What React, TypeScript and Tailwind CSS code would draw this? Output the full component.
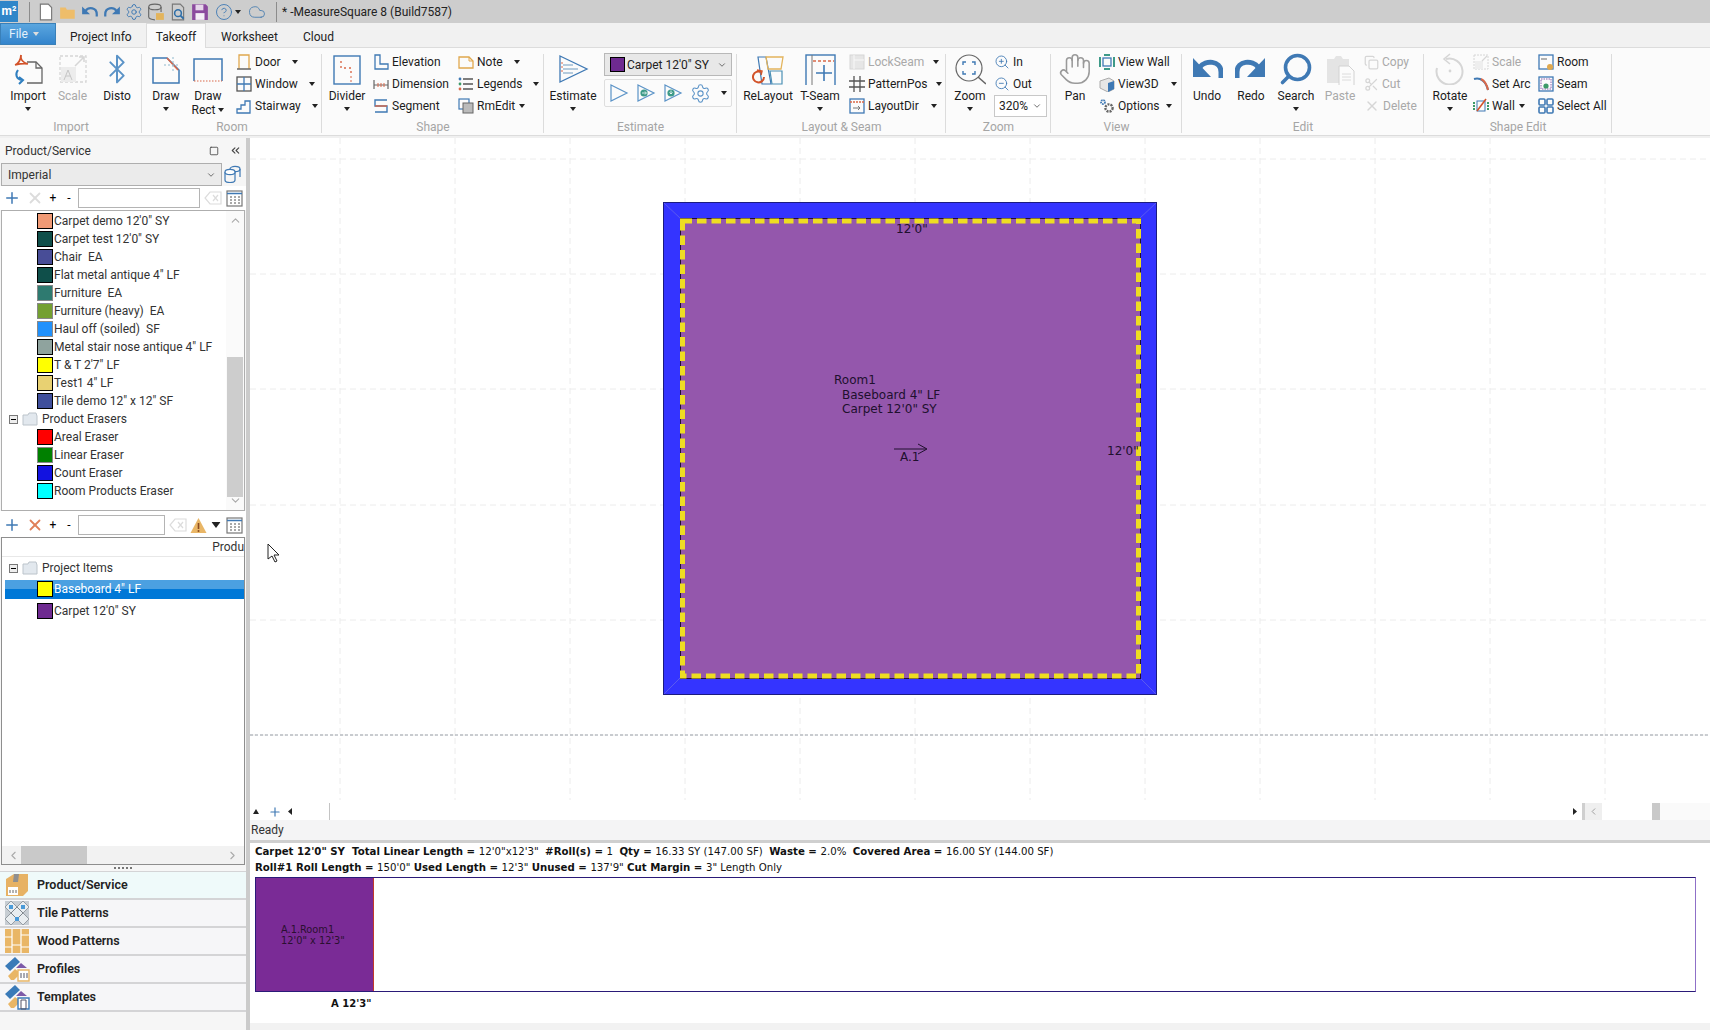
import type { ReactNode } from 'react';
import { Bluetooth, ChevronDown, ChevronLeft, ChevronRight, ChevronUp, ChevronsLeft, CircleHelp, Cloud, Copy, Hand, Plus, Scissors, Search, Settings, Square, X, ZoomIn, ZoomOut } from 'lucide-react';

const Caret = ({ className = '' }: { className?: string }) => (
  <svg width="6" height="4" viewBox="0 0 6 4" className={`shrink-0 ${className}`}>
    <path d="M0 0h6L3 4z" fill="#222" />
  </svg>
);

const Ico = ({ s = 32, v = 32, children }: { s?: number; v?: number; children: ReactNode }) => (
  <svg width={s} height={s} viewBox={`0 0 ${v} ${v}`} fill="none" className="shrink-0">
    {children}
  </svg>
);

const BLUE = '#3f79b4';
const GREY = '#d6d6d6';

// big ribbon icons
const ImportIcon = () => (
  <Ico>
    <path d="M15 9h9l6 6v15H15" stroke="#666" strokeWidth="1.3" />
    <path d="M24 9v6h6" stroke="#666" strokeWidth="1.3" />
    <path d="M9 2c-1 5 3 8 7 9M9 2C9 7 6 11 3 12M3 12c4-1 9-2 13-1" stroke="#d2532a" strokeWidth="1.8" />
    <path d="M6 17c-3 4-2 9 4 10M7 31l4-4-4-3" stroke="#2f7fc0" strokeWidth="2" />
  </Ico>
);
const ScaleIcon = () => (
  <Ico>
    <rect x="3" y="3" width="26" height="26" stroke={GREY} strokeWidth="1.3" strokeDasharray="3 2" />
    <rect x="4" y="14" width="15" height="15" fill="#ececec" />
    <path d="M7 27l4-10 4 10M9 23h4" stroke="#c6c6c6" />
    <path d="M18 13l9-9M22 4h5v5" stroke={GREY} strokeWidth="1.5" />
  </Ico>
);
const DrawIcon = () => (
  <Ico>
    <path d="M3 5h14l12 12v13H3z" stroke={BLUE} strokeWidth="1.5" />
    <path d="M17 5l11 12" stroke="#d9694a" strokeWidth="1.6" />
    <path d="M14 12h16M23 4v14" stroke="#8fb8cc" strokeDasharray="2 2" />
  </Ico>
);
const RectIcon = () => (
  <Ico>
    <path d="M2 28V6h28v22" stroke={BLUE} strokeWidth="1.5" />
    <path d="M2 28h28" stroke="#d9694a" strokeDasharray="1.5 1.5" />
  </Ico>
);
const DividerIcon = () => (
  <Ico>
    <rect x="3" y="3" width="26" height="28" stroke={BLUE} strokeWidth="1.4" />
    <path d="M10 8v7h10v8" stroke="#d9694a" strokeDasharray="2 3" strokeWidth="1.4" />
    <path d="M20 23v8" stroke="#d9694a" strokeDasharray="2 2" />
  </Ico>
);
const EstimateIcon = () => (
  <Ico>
    <path d="M3 3l27 13L3 29z" stroke={BLUE} strokeWidth="1.3" />
    <path d="M6 12h10M6 16h15M6 20h10" stroke="#9fbcd4" strokeWidth="1.3" />
    <path d="M4 10h2M4 14h2M4 18h2" stroke="#d9694a" />
  </Ico>
);
const ReLayoutIcon = () => (
  <Ico>
    <path d="M6 4h8l5 27H10z" stroke="#3f79b4" strokeWidth="1.2" />
    <path d="M14 4h17l-2 12H16z" stroke="#e3b45c" strokeWidth="1.3" />
    <path d="M18 18h12v13H20z" stroke="#4b90b5" strokeWidth="1.2" />
    <path d="M12 24a5.5 5.5 0 1 1-3-5" stroke="#d2532a" strokeWidth="2" />
    <path d="M5 17l5 1-1 4" stroke="#d2532a" strokeWidth="1.5" />
  </Ico>
);
const TSeamIcon = () => (
  <Ico>
    <rect x="2" y="2" width="29" height="31" stroke={BLUE} strokeWidth="1.4" />
    <path d="M8 2v31" stroke="#777" />
    <path d="M9 8h21" stroke="#d9694a" strokeWidth="1.5" strokeDasharray="3 2" />
    <path d="M20 12v16M12 20h16" stroke={BLUE} strokeWidth="1.6" />
  </Ico>
);
const ZoomIcon = () => (
  <Ico>
    <circle cx="15" cy="15" r="13" stroke="#666" strokeWidth="1.2" />
    <path d="M24 24l8 7" stroke="#666" strokeWidth="1.6" />
    <path d="M9 12V9h3M18 9h3v3M21 18v3h-3M12 21H9v-3" stroke={BLUE} strokeWidth="1.4" />
  </Ico>
);
const UndoIcon = () => (
  <Ico>
    <path d="M9 14c5-7 21-7 21 5v6" stroke={BLUE} strokeWidth="5" />
    <path d="M2 5v19h18z" fill={BLUE} />
  </Ico>
);
const RedoIcon = () => (
  <Ico>
    <path d="M23 14c-5-7-21-7-21 5v6" stroke={BLUE} strokeWidth="5" />
    <path d="M30 5v19H12z" fill={BLUE} />
  </Ico>
);
const RotateIcon = () => (
  <Ico>
    <path d="M12 6a13 13 0 1 1-9 9" stroke={GREY} strokeWidth="2" />
    <path d="M16 1l-6 5 6 5" stroke={GREY} strokeWidth="1.6" />
    <circle cx="16" cy="18" r="1.4" fill={GREY} />
  </Ico>
);
const PasteIcon = () => (
  <Ico>
    <path d="M3 6h7l2-3h5l2 3h6v24H3z" fill="#e4e4e4" />
    <path d="M15 13h10l5 5v15H15z" fill="#fbfbfb" stroke="#d2d2d2" />
    <path d="M18 21h9M18 24h9M18 27h9" stroke="#dcdcdc" />
  </Ico>
);

// small ribbon icons
const sm = { s: 16, v: 16 };
const DoorIcon = () => (
  <Ico {...sm}>
    <path d="M3 15V1h10v14" stroke="#e0a84e" strokeWidth="1.3" />
    <path d="M1 15h14" stroke="#666" strokeWidth="1.5" />
  </Ico>
);
const WindowIcon = () => (
  <Ico {...sm}>
    <rect x="1" y="1" width="14" height="14" stroke="#555" strokeWidth="1.3" />
    <path d="M8 1v14M1 8h14" stroke={BLUE} strokeWidth="1.3" />
  </Ico>
);
const StairIcon = () => (
  <Ico {...sm}>
    <path d="M1 15v-4h4V7h4V3h5v12z" stroke={BLUE} strokeWidth="1.3" />
  </Ico>
);
const ElevationIcon = () => (
  <Ico {...sm}>
    <path d="M2 1h5v9h8v5H2z" stroke={BLUE} strokeWidth="1.3" />
  </Ico>
);
const DimensionIcon = () => (
  <Ico {...sm}>
    <path d="M1 4v9M15 4v9M1 9h14" stroke="#666" strokeWidth="1.2" />
    <path d="M5 7v4M8 7v4M11 7v4" stroke="#d9694a" />
  </Ico>
);
const SegmentIcon = () => (
  <Ico {...sm}>
    <path d="M14 2H2v6h12v6H2" stroke={BLUE} strokeWidth="1.4" />
    <path d="M2 8h12" stroke="#d9694a" strokeWidth="1.4" />
  </Ico>
);
const NoteIcon = () => (
  <Ico {...sm}>
    <path d="M1 3h10l4 4v7H1z" stroke="#e0a84e" strokeWidth="1.3" />
    <path d="M11 3v4h4" stroke="#e0a84e" />
  </Ico>
);
const LegendsIcon = () => (
  <Ico {...sm}>
    <path d="M5 3h10M5 8h10M5 13h10" stroke="#555" strokeWidth="1.5" />
    <circle cx="2" cy="3" r="1.4" fill={BLUE} />
    <circle cx="2" cy="8" r="1.4" fill="#3d9a68" />
    <circle cx="2" cy="13" r="1.4" fill="#d9694a" />
  </Ico>
);
const RmEditIcon = () => (
  <Ico {...sm}>
    <rect x="1" y="1" width="10" height="10" stroke={BLUE} strokeWidth="1.2" />
    <rect x="5" y="5" width="10" height="10" fill="#bbb" stroke="#666" />
  </Ico>
);
const LockSeamIcon = () => (
  <Ico {...sm}>
    <rect x="1" y="1" width="14" height="14" fill="#e6e6e6" stroke={GREY} />
    <path d="M5 1v14M5 6h10" stroke="#f8f8f8" />
  </Ico>
);
const PatternIcon = () => (
  <Ico {...sm}>
    <path d="M5 0v16M11 0v16M0 5h16M0 11h16" stroke="#555" strokeWidth="1.3" />
  </Ico>
);
const LayoutDirIcon = () => (
  <Ico {...sm}>
    <rect x="1" y="1" width="14" height="14" stroke={BLUE} strokeWidth="1.3" />
    <path d="M1 4h14" stroke="#d9694a" strokeDasharray="2 1" strokeWidth="1.3" />
    <path d="M4 10h7M9 8l2 2-2 2" stroke="#777" />
  </Ico>
);
const ViewWallIcon = () => (
  <Ico {...sm}>
    <rect x="4" y="4" width="8" height="8" stroke={BLUE} strokeWidth="1.3" />
    <path d="M1 3v10M15 3v10M5 1h6M5 15h6" stroke="#3d9a88" strokeWidth="2" />
  </Ico>
);
const View3dIcon = () => (
  <Ico {...sm}>
    <path d="M1 5l9-3 5 3v8l-6 3-8-4z" fill="#e6e6e6" stroke="#aaa" />
    <path d="M9 7l6-2v8l-6 3z" fill="#3f79b4" />
  </Ico>
);
const OptionsIcon = () => (
  <Ico {...sm}>
    <circle cx="10" cy="10" r="3.6" stroke="#666" strokeWidth="2.4" strokeDasharray="2 1" />
    <circle cx="4" cy="4" r="2" stroke={BLUE} strokeWidth="1.8" strokeDasharray="1.5 .7" />
  </Ico>
);
const ShapeScaleIcon = () => (
  <Ico {...sm}>
    <rect x="1" y="1" width="14" height="14" stroke={GREY} strokeDasharray="2 1" />
    <rect x="2" y="7" width="8" height="8" fill="#eee" />
    <path d="M9 7l5-5" stroke={GREY} strokeWidth="1.3" />
  </Ico>
);
const SetArcIcon = () => (
  <Ico {...sm}>
    <path d="M1 3c7-2 12 3 14 11" stroke="#3f79b4" strokeWidth="2" />
    <path d="M8 3c4 2 6 6 7 11" stroke="#d9694a" strokeWidth="2" />
  </Ico>
);
const WallIcon = () => (
  <Ico {...sm}>
    <path d="M1 4v8M15 4v8" stroke="#3d9a68" strokeWidth="2" strokeDasharray="2 1" />
    <rect x="4" y="3" width="8" height="10" stroke={BLUE} />
    <path d="M4 13L13 1" stroke="#d2532a" strokeWidth="1.6" />
  </Ico>
);
const RoomIcon = () => (
  <Ico {...sm}>
    <rect x="1" y="1" width="14" height="14" stroke={BLUE} strokeWidth="1.3" />
    <path d="M3 5h6" stroke="#999" strokeWidth="1.5" />
    <circle cx="12" cy="13" r="3" fill="#e0a84e" />
  </Ico>
);
const SeamIcon = () => (
  <Ico {...sm}>
    <rect x="1" y="1" width="14" height="14" stroke={BLUE} strokeWidth="1.3" />
    <rect x="3" y="3" width="10" height="10" stroke="#8c5fb0" strokeDasharray="1.5 1" />
    <circle cx="8" cy="10" r="2.6" fill="#3d9a68" />
  </Ico>
);
const SelectAllIcon = () => (
  <Ico {...sm}>
    <rect x="1" y="1" width="6" height="6" rx="1" stroke={BLUE} strokeWidth="1.6" />
    <rect x="9" y="1" width="6" height="6" rx="1" stroke={BLUE} strokeWidth="1.6" />
    <rect x="1" y="9" width="6" height="6" rx="1" stroke={BLUE} strokeWidth="1.6" />
    <rect x="9" y="9" width="6" height="6" rx="1" stroke={BLUE} strokeWidth="1.6" />
  </Ico>
);

const BigBtn = ({ w, icon, label, label2, caret, off }: { w: string; icon: ReactNode; label: string; label2?: string; caret?: boolean; off?: boolean }) => (
  <div className={`flex flex-col items-center shrink-0 ${w} ${off ? 'text-[#a9a9a9]' : 'text-[#1c1c1c]'}`}>
    <div className="h-[41px] flex items-center justify-center">{icon}</div>
    <div className="h-[14px] leading-[14px] whitespace-nowrap">{label}</div>
    {label2 && (
      <div className="h-[14px] leading-[13px] flex items-center gap-[3px] whitespace-nowrap">
        {label2}
        {caret && <Caret />}
      </div>
    )}
    {!label2 && caret && (
      <div className="h-[12px] flex items-center">
        <Caret />
      </div>
    )}
  </div>
);

const SmallBtn = ({ icon, label, caret, off }: { icon: ReactNode; label: string; caret?: string; off?: boolean }) => (
  <div className={`h-[22px] flex items-center gap-[3px] whitespace-nowrap ${off ? 'text-[#a9a9a9]' : 'text-[#1c1c1c]'}`}>
    {icon}
    <span>{label}</span>
    {caret && <Caret className={caret} />}
  </div>
);

const SmallCol = ({ className, children }: { className: string; children: ReactNode }) => (
  <div className={`flex flex-col pt-[3px] shrink-0 ${className}`}>{children}</div>
);

const Group = ({ w, label, children }: { w: string; label: string; children: ReactNode }) => (
  <div className={`relative h-full shrink-0 flex flex-col ${w}`}>
    <div className="flex h-[71px] items-start">{children}</div>
    <div className="text-center text-[#a5a5a5] leading-[14px] mt-[1px]">{label}</div>
    <div className="absolute right-0 top-[6px] bottom-[2px] w-px bg-[#dcdcdc]" />
  </div>
);

const Ribbon = () => (
  <div className="h-[88px] bg-[#fbfbfb] flex text-[12px] border-b border-[#dcdcdc] shrink-0">
    <Group w="w-[142px]" label="Import">
      <div className="w-[6px]" />
      <BigBtn w="w-[44px]" icon={<ImportIcon />} label="Import" caret />
      <BigBtn w="w-[45px]" icon={<ScaleIcon />} label="Scale" off />
      <BigBtn w="w-[44px]" icon={<Bluetooth size={32} color="#5b93c7" strokeWidth={1.5} />} label="Disto" />
    </Group>
    <Group w="w-[180px]" label="Room">
      <div className="w-[2px]" />
      <BigBtn w="w-[44px]" icon={<DrawIcon />} label="Draw" caret />
      <BigBtn w="w-[40px]" icon={<RectIcon />} label="Draw" label2="Rect" caret />
      <SmallCol className="ml-[8px] w-[84px]">
        <SmallBtn icon={<DoorIcon />} label="Door" caret="ml-[8px]" />
        <SmallBtn icon={<WindowIcon />} label="Window" caret="ml-[8px]" />
        <SmallBtn icon={<StairIcon />} label="Stairway" caret="ml-[8px]" />
      </SmallCol>
    </Group>
    <Group w="w-[222px]" label="Shape">
      <div className="w-[4px]" />
      <BigBtn w="w-[42px]" icon={<DividerIcon />} label="Divider" caret />
      <SmallCol className="ml-[5px] w-[85px]">
        <SmallBtn icon={<ElevationIcon />} label="Elevation" />
        <SmallBtn icon={<DimensionIcon />} label="Dimension" />
        <SmallBtn icon={<SegmentIcon />} label="Segment" />
      </SmallCol>
      <SmallCol className="w-[84px]">
        <SmallBtn icon={<NoteIcon />} label="Note" caret="ml-[8px]" />
        <SmallBtn icon={<LegendsIcon />} label="Legends" caret="ml-[7px]" />
        <SmallBtn icon={<RmEditIcon />} label="RmEdit" caret="ml-[1px]" />
      </SmallCol>
    </Group>
    <Group w="w-[193px]" label="Estimate">
      <BigBtn w="w-[58px]" icon={<EstimateIcon />} label="Estimate" caret />
      <div className="ml-[2px] w-[128px] pt-[5px] flex flex-col gap-[3px]">
        <div className="h-[23px] bg-[#e8e8e8] border border-[#b8b8b8] flex items-center pl-[5px] pr-[4px]">
          <span className="w-[15px] h-[15px] bg-[#6e2a90] border border-black mr-[2px]" />
          <span className="flex-1 text-[#222]">Carpet 12'0" SY</span>
          <ChevronDown size={10} color="#555" />
        </div>
        <div className="h-[28px] border border-[#dedede] rounded-[2px] flex items-center gap-[7px] pl-[4px]">
          <Ico s={20} v={20}><path d="M2 2l16 8-16 8z" stroke="#5b93c7" strokeWidth="1.2" /></Ico>
          <Ico s={20} v={20}>
            <path d="M2 2l16 8-16 8z" stroke="#5b93c7" strokeWidth="1.2" />
            <circle cx="8" cy="10" r="3.6" fill="#3d9a88" />
            <path d="M6 10h4M9 8.5l1.5 1.5L9 11.5" stroke="#fff" strokeWidth=".8" />
          </Ico>
          <Ico s={20} v={20}>
            <path d="M2 2l16 8-16 8z" stroke="#5b93c7" strokeWidth="1.2" />
            <circle cx="8" cy="10" r="3.6" fill="#3d9a88" />
            <path d="M8 7.5v3.5M6.5 9.5L8 11l1.5-1.5" stroke="#fff" strokeWidth=".8" />
          </Ico>
          <Settings size={21} color="#5b93c7" strokeWidth={1.2} />
          <Caret className="ml-[3px]" />
        </div>
      </div>
    </Group>
    <Group w="w-[209px]" label="Layout & Seam">
      <div className="w-[3px]" />
      <BigBtn w="w-[56px]" icon={<ReLayoutIcon />} label="ReLayout" />
      <BigBtn w="w-[48px]" icon={<TSeamIcon />} label="T-Seam" caret />
      <SmallCol className="ml-[5px] w-[94px]">
        <SmallBtn icon={<LockSeamIcon />} label="LockSeam" caret="ml-[6px]" off />
        <SmallBtn icon={<PatternIcon />} label="PatternPos" caret="ml-[6px]" />
        <SmallBtn icon={<LayoutDirIcon />} label="LayoutDir" caret="ml-[9px]" />
      </SmallCol>
    </Group>
    <Group w="w-[105px]" label="Zoom">
      <div className="w-[3px]" />
      <BigBtn w="w-[42px]" icon={<ZoomIcon />} label="Zoom" caret />
      <SmallCol className="ml-[3px]">
        <SmallBtn icon={<ZoomIn size={16} color="#3f79b4" strokeWidth={1.3} />} label="In" />
        <SmallBtn icon={<ZoomOut size={16} color="#3f79b4" strokeWidth={1.3} />} label="Out" />
        <div className="w-[53px] h-[22px] bg-white border border-[#c8c8c8] flex items-center justify-between px-[4px] text-[#222]">
          320%
          <ChevronDown size={10} color="#555" />
        </div>
      </SmallCol>
    </Group>
    <Group w="w-[131px]" label="View">
      <div className="w-[4px]" />
      <BigBtn w="w-[40px]" icon={<Hand size={34} color="#9a9a9a" strokeWidth={1.1} />} label="Pan" />
      <SmallCol className="ml-[4px]">
        <SmallBtn icon={<ViewWallIcon />} label="View Wall" />
        <SmallBtn icon={<View3dIcon />} label="View3D" caret="ml-[9px]" />
        <SmallBtn icon={<OptionsIcon />} label="Options" caret="ml-[3px]" />
      </SmallCol>
    </Group>
    <Group w="w-[242px]" label="Edit">
      <div className="w-[3px]" />
      <BigBtn w="w-[44px]" icon={<UndoIcon />} label="Undo" />
      <BigBtn w="w-[44px]" icon={<RedoIcon />} label="Redo" />
      <BigBtn w="w-[46px]" icon={<Search size={36} color="#3f79b4" strokeWidth={2.4} className="-scale-x-100" />} label="Search" caret />
      <BigBtn w="w-[42px]" icon={<PasteIcon />} label="Paste" off />
      <SmallCol className="ml-[3px]">
        <SmallBtn icon={<Copy size={15} color="#d6d6d6" />} label="Copy" off />
        <SmallBtn icon={<Scissors size={15} color="#d6d6d6" />} label="Cut" off />
        <SmallBtn icon={<X size={16} color="#d6d6d6" />} label="Delete" off />
      </SmallCol>
    </Group>
    <Group w="w-[188px]" label="Shape Edit">
      <div className="w-[4px]" />
      <BigBtn w="w-[44px]" icon={<RotateIcon />} label="Rotate" caret />
      <SmallCol className="ml-[1px] w-[64px]">
        <SmallBtn icon={<ShapeScaleIcon />} label="Scale" off />
        <SmallBtn icon={<SetArcIcon />} label="Set Arc" />
        <SmallBtn icon={<WallIcon />} label="Wall" caret="ml-[1px]" />
      </SmallCol>
      <SmallCol className="ml-[1px]">
        <SmallBtn icon={<RoomIcon />} label="Room" />
        <SmallBtn icon={<SeamIcon />} label="Seam" />
        <SmallBtn icon={<SelectAllIcon />} label="Select All" />
      </SmallCol>
    </Group>
  </div>
);

const TitleBar = () => (
  <div className="h-[23px] bg-[#cdcdcd] flex items-center shrink-0 text-[12px] text-[#222]">
    <div className="w-[18px] h-[21px] bg-[#2f86c9] text-white text-[12px] font-bold leading-[21px] text-center">m²</div>
    <div className="ml-[11px] w-px h-[20px] bg-[#8c8c8c]" />
    <div className="ml-[7px] flex items-center gap-[4px]">
      <Ico s={18} v={16}><path d="M3 1h7l3 3v11H3z" fill="#fff" stroke="#777" /></Ico>
      <Ico s={18} v={16}><path d="M1 4h5l1 2h7v8H1z" fill="#eebd6a" /></Ico>
      <Ico s={18} v={16}><path d="M4 7c3-4 10-3 10 3v2" stroke={BLUE} strokeWidth="2" /><path d="M1 3v7h7z" fill={BLUE} /></Ico>
      <Ico s={18} v={16}><path d="M12 7C9 3 2 4 2 10v2" stroke={BLUE} strokeWidth="2" /><path d="M15 3v7H8z" fill={BLUE} /></Ico>
      <Settings size={18} color="#3f79b4" strokeWidth={1.3} />
      <Ico s={18} v={16}><ellipse cx="7" cy="3.5" rx="5.5" ry="2.5" stroke="#666" /><path d="M1.5 3.5v9c0 1.5 3 2.5 5.5 2.5M12.5 3.5V8" stroke="#666" /><rect x="8" y="9" width="7" height="6" fill="#e3b45c" /></Ico>
      <Ico s={18} v={16}><path d="M3 1h7l3 3v11H3z" stroke="#777" /><circle cx="8" cy="9" r="3" stroke="#2f6fa8" strokeWidth="1.4" /><path d="M10 11l3 3" stroke="#2f6fa8" strokeWidth="1.6" /></Ico>
      <Ico s={18} v={16}><path d="M1 1h12l2 2v12H1z" fill="#8b4a9e" /><rect x="4" y="1.5" width="7" height="5" fill="#e6d6ea" /><rect x="4" y="9" width="8" height="6" fill="#f4eef6" /></Ico>
    </div>
    <div className="ml-[6px] flex items-center gap-[2px]">
      <CircleHelp size={18} color="#3f79b4" strokeWidth={1.2} />
      <Caret />
    </div>
    <Cloud size={18} color="#4c7fb0" strokeWidth={1.2} className="ml-[7px]" />
    <div className="ml-[10px] w-px h-[20px] bg-[#8c8c8c]" />
    <div className="ml-[5px]">* -MeasureSquare 8 (Build7587)</div>
  </div>
);

const TabRow = () => (
  <div className="h-[25px] bg-[#f1f1f1] flex items-end shrink-0 text-[12px] text-[#222] border-b border-[#dcdcdc]">
    <div className="w-[56px] h-[22px] mb-[2px] bg-linear-to-b from-[#5aa6df] to-[#3384cc] border border-[#3a80b8] flex items-center gap-[5px] pl-[8px] text-[#e4f1fb]">
      File
      <Caret className="invert" />
    </div>
    <div className="ml-[14px] w-[76px] h-[24px] leading-[28px]">Project Info</div>
    <div className="w-[60px] h-[25px] -mb-px bg-[#fbfbfb] border border-b-0 border-[#dcdcdc] text-center leading-[27px]">Takeoff</div>
    <div className="ml-[15px] w-[82px] h-[24px] leading-[28px]">Worksheet</div>
    <div className="h-[24px] leading-[28px]">Cloud</div>
  </div>
);

const SWATCH: { name: string; color: string; plain?: boolean }[] = [
  { name: `Carpet demo 12'0" SY`, color: '#f19a75' },
  { name: `Carpet test 12'0" SY`, color: '#0f4f4a' },
  { name: 'Chair  EA', color: '#484d97' },
  { name: 'Flat metal antique 4" LF', color: '#0f4f4a' },
  { name: 'Furniture  EA', color: '#2e7a70', plain: true },
  { name: 'Furniture (heavy)  EA', color: '#74a031', plain: true },
  { name: 'Haul off (soiled)  SF', color: '#2191fb', plain: true },
  { name: 'Metal stair nose antique 4" LF', color: '#8fa39e' },
  { name: `T & T 2'7" LF`, color: '#ffff00' },
  { name: 'Test1 4" LF', color: '#e8d172' },
  { name: `Tile demo 12" x 12" SF`, color: '#3f4f9c' },
];

const ERASERS: { name: string; color: string; plain?: boolean }[] = [
  { name: 'Areal Eraser', color: '#ff0000' },
  { name: 'Linear Eraser', color: '#008000', plain: true },
  { name: 'Count Eraser', color: '#1212e0' },
  { name: 'Room Products Eraser', color: '#00ffff' },
];

const Row = ({ name, color, plain, selected }: { name: string; color: string; plain?: boolean; selected?: boolean }) => (
  <div className={`h-[18px] flex items-center pl-[35px] whitespace-pre ${selected ? 'text-white' : 'text-[#333]'}`}>
    <span className={`w-[16px] h-[16px] shrink-0 mr-px border ${plain ? 'border-[#888]' : 'border-black'}`} style={{ backgroundColor: color }} />
    {name}
  </div>
);

const Folder = ({ name }: { name: string }) => (
  <div className="h-[18px] flex items-center pl-[7px] text-[#333]">
    <span className="w-[9px] h-[9px] border border-[#777] bg-[#eee] flex items-center justify-center shrink-0">
      <span className="w-[5px] h-px bg-black" />
    </span>
    <div className="ml-[4px]">
      <Ico s={16} v={16}>
        <path d="M1 4h5l1-2h7l1 3v9H1z" fill="#e2e8ee" stroke="#bcc4cb" />
      </Ico>
    </div>
    <span className="ml-[4px]">{name}</span>
  </div>
);

const GridBtn = () => (
  <Ico s={17} v={17}>
    <rect x="1" y="1" width="15" height="15" stroke="#777" strokeWidth="1.2" />
    <path d="M1 3.5h15" stroke="#3f79b4" strokeWidth="1.5" />
    <path d="M4 7h2M8 7h2M12 7h2M4 10h2M8 10h2M12 10h2M4 13h2M8 13h2M12 13h2" stroke="#555" strokeWidth="1.2" />
  </Ico>
);

const EraseBtn = () => (
  <Ico s={18} v={18}>
    <path d="M6 3h11v12H6L1 9z" stroke="#dcdcdc" strokeWidth="1.2" />
    <path d="M9 6l5 6M14 6l-5 6" stroke="#dcdcdc" strokeWidth="1.2" />
  </Ico>
);

const AccordionRow = ({ label, icon, active }: { label: string; icon: ReactNode; active?: boolean }) => (
  <div className={`h-[28px] flex items-center border-b-2 border-[#d4d4d6] ${active ? 'bg-[#effafa]' : 'bg-[#f6f6f8]'}`}>
    <div className="w-[24px] ml-[5px] flex justify-center">{icon}</div>
    <div className="ml-[8px] font-semibold text-[12.5px] text-[#222]">{label}</div>
  </div>
);

const ProductIcon = () => (
  <Ico s={24} v={24}>
    <path d="M1 6l8-5h14v17l-5 5H1z" fill="#e7b264" />
    <path d="M9 1l-1 8h5l1-8" fill="#8f8f8f" />
    <rect x="3" y="14" width="10" height="8" fill="#fff" />
    <path d="M5 17v3M8 17v3M11 17v3" stroke="#666" />
  </Ico>
);
const TileIcon = () => (
  <Ico s={24} v={24}>
    <rect width="24" height="24" fill="#c7cdd3" />
    <path d="M6 0l6 6-6 6-6-6zM18 0l6 6-6 6-6-6zM12 6l6 6-6 6-6-6zM6 12l6 6-6 6-6-6zM18 12l6 6-6 6-6-6z" fill="#e9edf0" stroke="#6a7078" strokeWidth=".6" />
    <rect x="4" y="4" width="4" height="4" fill="#4a9ad8" />
    <rect x="16" y="4" width="4" height="4" fill="#4a9ad8" />
    <rect x="10" y="16" width="4" height="4" fill="#4a9ad8" />
  </Ico>
);
const WoodIcon = () => (
  <Ico s={24} v={24}>
    <rect width="24" height="24" fill="#e9b666" />
    <path d="M7 0v24M16 0v24M0 8h7M7 16h9M16 6h8M0 18h7M16 18h8" stroke="#fff" strokeWidth="1.2" />
  </Ico>
);
const ProfileIcon = ({ door }: { door?: boolean }) => (
  <Ico s={26} v={26}>
    <path d="M1 10L11 1l5 5-10 9z" fill="#3a7ab8" />
    <path d="M4 20l7-7 4 3v3l-5 5H7z" fill="#e9b666" />
    <path d="M12 12l5-5 6 5z" fill="#7d5aa8" />
    <path d="M14 14h11v11H14z" stroke={door ? '#3a7ab8' : '#e9b666'} strokeWidth="1.4" fill="#fff" />
    <path d={door ? 'M17 16h5v9h-5z' : 'M17 17v5M20 17v5M23 17v5'} stroke="#556" />
  </Ico>
);

const LeftPanel = () => (
  <div className="w-[246px] h-full bg-[#f6f6f6] flex flex-col shrink-0 text-[12px]">
    <div className="h-[25px] flex items-center pl-[5px] text-[#333]">
      <span className="flex-1">Product/Service</span>
      <Square size={10} color="#444" className="mr-[10px]" />
      <ChevronsLeft size={13} color="#444" className="mr-[4px]" />
    </div>
    <div className="h-[23px] flex pl-px">
      <div className="w-[221px] bg-[#ebebeb] border border-[#aeaeae] flex items-center justify-between pl-[6px] pr-[5px] text-[#333]">
        Imperial
        <ChevronDown size={10} color="#555" />
      </div>
      <Ico s={20} v={20}>
        <ellipse cx="13" cy="6" rx="5" ry="2.6" stroke="#3f79b4" strokeWidth="1.2" />
        <path d="M18 6v8M3 9v8c0 1.5 2 2.5 5 2.5s5-1 5-2.5V9" stroke="#3f79b4" strokeWidth="1.2" />
        <ellipse cx="8" cy="9" rx="5" ry="2.6" fill="#fff" stroke="#3f79b4" strokeWidth="1.2" />
      </Ico>
    </div>
    <div className="h-[24px] flex items-center pl-[3px] bg-white">
      <Plus size={18} color="#3f79b4" strokeWidth={2} />
      <X size={18} color="#dcdcdc" strokeWidth={2.4} className="ml-[5px]" />
      <span className="ml-px w-[16px] text-center">+</span>
      <span className="w-[8px] ml-[4px] text-center">-</span>
      <div className="ml-[5px] w-[122px] h-[20px] bg-white border border-[#b4b4b4]" />
      <div className="ml-[4px]"><EraseBtn /></div>
      <div className="ml-[4px]"><GridBtn /></div>
    </div>
    <div className="relative ml-px mr-px h-[301px] bg-white border border-[#aeaeae] overflow-hidden pt-[1px] text-[#333]">
      {SWATCH.map((s) => (
        <Row key={s.name} {...s} />
      ))}
      <Folder name="Product Erasers" />
      {ERASERS.map((s) => (
        <Row key={s.name} {...s} />
      ))}
      <div className="absolute right-0 top-0 bottom-0 w-[18px] bg-[#fafafa] flex flex-col items-center justify-between py-[3px]">
        <ChevronUp size={13} color="#aaa" />
        <div className="absolute left-[1px] right-[1px] top-[146px] h-[140px] bg-[#cdcdcd]" />
        <ChevronDown size={13} color="#aaa" />
      </div>
    </div>
    <div className="h-[26px] flex items-center pl-[3px] pt-[2px] bg-white">
      <Plus size={18} color="#3f79b4" strokeWidth={2} />
      <X size={18} color="#e0805a" strokeWidth={2.4} className="ml-[5px]" />
      <span className="ml-px w-[16px] text-center">+</span>
      <span className="w-[8px] ml-[4px] text-center">-</span>
      <div className="ml-[5px] w-[87px] h-[20px] bg-white border border-[#b4b4b4]" />
      <div className="ml-[4px]"><EraseBtn /></div>
      <div className="ml-[3px]">
        <Ico s={17} v={17}>
          <path d="M8.5 1L16.5 16H.5z" fill="#e9b666" />
          <path d="M8.5 6v6" stroke="#8a4a20" strokeWidth="1.6" />
          <circle cx="8.5" cy="14" r="1" fill="#8a4a20" />
        </Ico>
      </div>
      <Caret className="ml-[6px] mr-[7px] scale-150" />
      <GridBtn />
    </div>
    <div className="relative ml-px mr-px flex-1 bg-white border border-[#8e8e8e] overflow-hidden text-[#333]">
      <div className="h-[19px] border-b border-[#e8e8e8] flex justify-end">
        <span className="leading-[19px]">Produ</span>
      </div>
      <div className="pt-[2px]">
        <Folder name="Project Items" />
      </div>
      <div className="mt-[3px] ml-[3px] h-[19px] bg-[#0078d7]">
        <div className="relative h-[19px] -ml-[3px]">
          <div className="absolute left-[3px] right-0 top-0 h-[9px] bg-[#4ba0e1]" />
          <div className="relative">
            <Row name={`Baseboard 4" LF`} color="#ffff00" selected />
          </div>
        </div>
      </div>
      <div className="mt-[3px]">
        <Row name={`Carpet 12'0" SY`} color="#6e2a90" />
      </div>
      <div className="absolute left-0 right-0 bottom-0 h-[18px] bg-[#f2f2f2] flex items-center justify-between px-[5px]">
        <ChevronLeft size={13} color="#aaa" />
        <div className="absolute left-[19px] w-[66px] top-0 bottom-0 bg-[#c9c9c9]" />
        <ChevronRight size={13} color="#aaa" />
      </div>
    </div>
    <div className="h-[6px] flex items-center justify-center gap-[2px]">
      {[0, 1, 2, 3, 4].map((d) => (
        <span key={d} className="w-[2px] h-[2px] bg-[#777]" />
      ))}
    </div>
    <div className="border-t border-[#d4d4d6]">
      <AccordionRow label="Product/Service" icon={<ProductIcon />} active />
      <AccordionRow label="Tile Patterns" icon={<TileIcon />} />
      <AccordionRow label="Wood Patterns" icon={<WoodIcon />} />
      <AccordionRow label="Profiles" icon={<ProfileIcon />} />
      <AccordionRow label="Templates" icon={<ProfileIcon door />} />
    </div>
    <div className="h-[18px]" />
  </div>
);

const gridX = [90, 205, 320, 435, 550, 665, 780, 895, 1010, 1125, 1240, 1355];
const gridY = [21, 136, 251, 367, 482, 597];

const Canvas = () => (
  <div className="relative flex-1 bg-white overflow-hidden font-['DejaVu_Sans',sans-serif] text-[12px] text-[#20102e]">
    <svg width="1460" height="682" className="absolute left-0 top-0">
      {gridX.map((x) => (
        <line key={x} x1={x} y1="0" x2={x} y2="662" stroke="#ececec" strokeDasharray="6 4" />
      ))}
      {gridY.map((y) => (
        <line key={y} x1="0" y1={y} x2="1460" y2={y} stroke="#ececec" strokeDasharray="6 4" />
      ))}
      <line x1="0" y1="597" x2="1460" y2="597" stroke="#9aa0a8" strokeDasharray="3 2" />
      <rect x="413.5" y="64.5" width="493" height="492" fill="#3434ff" stroke="#1b1b80" />
      <path d="M414 65l17 16M906 65l-17 16M414 556l17-17M906 556l-17-17" stroke="#5a5af0" />
      <rect x="430.5" y="80.5" width="460" height="460" fill="#9457ac" stroke="#221030" />
      <rect x="432.5" y="83" width="456" height="455" fill="none" stroke="#eedd22" strokeWidth="5" strokeDasharray="9.5 5" />
      <path d="M644 311h32M668 306l9 5-9 5" stroke="#20102e" fill="none" />
    </svg>
    <span className="absolute left-[646px] top-[82px]">12'0"</span>
    <span className="absolute left-[584px] top-[233px]">Room1</span>
    <span className="absolute left-[592px] top-[248px]">Baseboard 4" LF</span>
    <span className="absolute left-[592px] top-[262px]">Carpet 12'0" SY</span>
    <span className="absolute left-[650px] top-[310px]">A.1</span>
    <span className="absolute left-[857px] top-[304px]">12'0"</span>
    {/* cursor */}
    <svg width="16" height="20" viewBox="0 0 16 20" className="absolute left-[17px] top-[405px]">
      <path d="M1 1v15l4-3 3 6 2-1-3-6h5z" fill="#fff" stroke="#222" />
    </svg>
    <div className="absolute left-0 right-0 top-[665px] h-[17px] flex items-center">
      <svg width="6" height="5" viewBox="0 0 6 5" className="ml-[3px]"><path d="M3 0l3 5H0z" fill="#222" /></svg>
      <Plus size={14} color="#3f79b4" className="ml-[9px]" />
      <svg width="4" height="7" viewBox="0 0 4 7" className="ml-[6px]"><path d="M4 0v7L0 3.5z" fill="#222" /></svg>
      <div className="ml-[37px] w-px h-[17px] bg-[#c4c4c4]" />
      <svg width="4" height="7" viewBox="0 0 4 7" className="ml-auto mr-[5px]"><path d="M0 0v7l4-3.5z" fill="#222" /></svg>
      <div className="w-[128px] h-[17px] flex border-l-[3px] border-[#cfcfcf] bg-[#fafafa]">
        <div className="w-[17px] bg-[#efefef] flex items-center justify-center">
          <ChevronLeft size={11} color="#999" />
        </div>
        <div className="w-[50px] bg-white" />
        <div className="w-[8px] bg-[#c9c9c9]" />
      </div>
    </div>
  </div>
);

const BottomPanel = () => (
  <div className="h-[187px] bg-white shrink-0 flex flex-col font-['DejaVu_Sans',sans-serif] text-[10.2px] text-[#111] relative">
    <div className="ml-[5px] h-[16px] flex items-end whitespace-pre">
      <b>Carpet 12'0" SY  Total Linear Length = </b><span>12'0"x12'3"  </span><b>#Roll(s) = </b><span>1  </span><b>Qty = </b><span>16.33 SY (147.00 SF)  </span><b>Waste = </b><span>2.0%  </span><b>Covered Area = </b><span>16.00 SY (144.00 SF)</span>
    </div>
    <div className="ml-[5px] h-[18px] flex items-center whitespace-pre">
      <b>Roll#1 Roll Length = </b><span>150'0" </span><b>Used Length = </b><span>12'3" </span><b>Unused = </b><span>137'9" </span><b>Cut Margin = </b><span>3" Length Only</span>
    </div>
    <div className="ml-[5px] w-[1441px] h-[115px] border border-[#2a1a78] border-r-[#8f70c8] flex">
      <div className="w-[118px] h-full bg-[#7a2b96] border-r border-r-[#c0392b] pl-[25px] pt-[46px] text-[9.8px] text-[#2a1030] leading-[11px]">
        <div>A.1.Room1</div>
        <div>12'0" x 12'3"</div>
      </div>
    </div>
    <div className="ml-[81px] mt-[4px] font-bold text-[10px]">A 12'3"</div>
    <div className="absolute left-0 right-0 bottom-0 h-[7px] bg-[#f2f2f2]" />
  </div>
);

export default function App() {
  return (
    <div className="w-[1710px] h-[1030px] flex flex-col overflow-hidden bg-[#f4f4f5] font-['Roboto',sans-serif]">
      <TitleBar />
      <TabRow />
      <Ribbon />
      <div className="h-[2px] bg-[#f0f0f0] shrink-0" />
      <div className="flex-1 flex min-h-0">
        <LeftPanel />
        <div className="w-[4px] bg-[#cbcbcb] shrink-0" />
        <div className="flex-1 flex flex-col min-w-0">
          <Canvas />
          <div className="h-[20px] bg-[#f4f4f5] text-[12px] leading-[20px] pl-px text-[#333] shrink-0">Ready</div>
          <div className="h-[3px] bg-[#cfcfcf] shrink-0" />
          <BottomPanel />
        </div>
      </div>
    </div>
  );
}
